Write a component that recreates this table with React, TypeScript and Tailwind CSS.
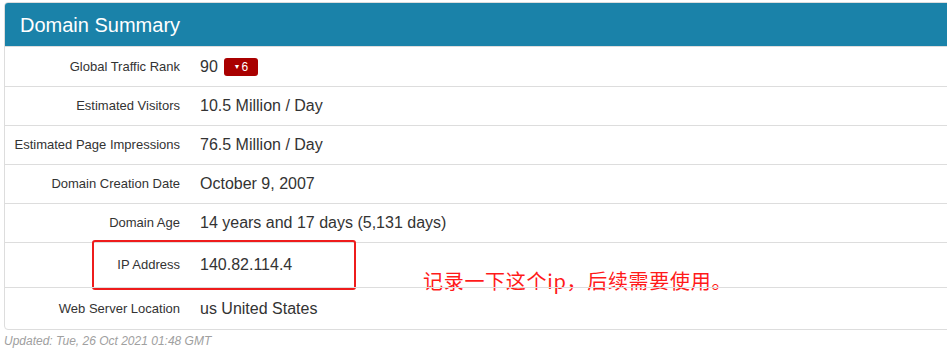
import React from "react";

type Row = { label: string; value: React.ReactNode; h: string };

const rows: Row[] = [
  {
    label: "Global Traffic Rank",
    h: "h-[40px]",
    value: (
      <span className="flex items-center">
        <span>90</span>
        <span className="ml-[6px] inline-flex h-[18px] w-[34px] items-center justify-center rounded-[3px] bg-[#a90000] text-[12px] leading-none text-white">
          <span className="mr-[1px] text-[7px]">▼</span>6
        </span>
      </span>
    ),
  },
  { label: "Estimated Visitors", h: "h-[39px]", value: "10.5 Million / Day" },
  { label: "Estimated Page Impressions", h: "h-[39px]", value: "76.5 Million / Day" },
  { label: "Domain Creation Date", h: "h-[39px]", value: "October 9, 2007" },
  { label: "Domain Age", h: "h-[39px]", value: "14 years and 17 days (5,131 days)" },
  { label: "IP Address", h: "h-[45px]", value: "140.82.114.4" },
  { label: "Web Server Location", h: "h-[42px]", value: "us United States" },
];

export default function App() {
  return (
    <div
      className="h-[352px] w-[947px] overflow-hidden bg-white pt-[2px] pl-[4px]"
      style={{ fontFamily: '"Liberation Sans", Arial, sans-serif' }}
    >
      <div className="w-[960px] rounded-[4px] border border-[#dddddd]">
        <div className="flex h-[43px] items-center rounded-t-[3px] bg-[#1a82a9] pl-[15px] text-[20px] text-white">
          Domain Summary
        </div>
        {rows.map((r, i) => (
          <div
            key={r.label}
            className={`relative flex items-center border-t border-[#dddddd] ${r.h}`}
          >
            <div className="w-[175px] text-right text-[13px] text-[#333333]">{r.label}</div>
            <div className="ml-[20px] text-[16px] text-[#333333]">{r.value}</div>
            {i === 5 && (
              <>
                <div className="absolute left-[87px] top-[-3px] h-[50px] w-[264px] rounded-[3px] border-2 border-[#ee1c1c]" />
                <div
                  className="absolute left-[418px] top-[26px] text-[20px] leading-[24px] tracking-[0.7px] text-[#ff1a1a]"
                  style={{ fontFamily: '"Noto Sans CJK SC", "Liberation Sans", sans-serif' }}
                >
                  记录一下这个ip，后续需要使用。
                </div>
              </>
            )}
          </div>
        ))}
      </div>
      <div className="mt-[2px] text-[12px] italic text-[#a0a0a0]">
        Updated: Tue, 26 Oct 2021 01:48 GMT
      </div>
    </div>
  );
}
